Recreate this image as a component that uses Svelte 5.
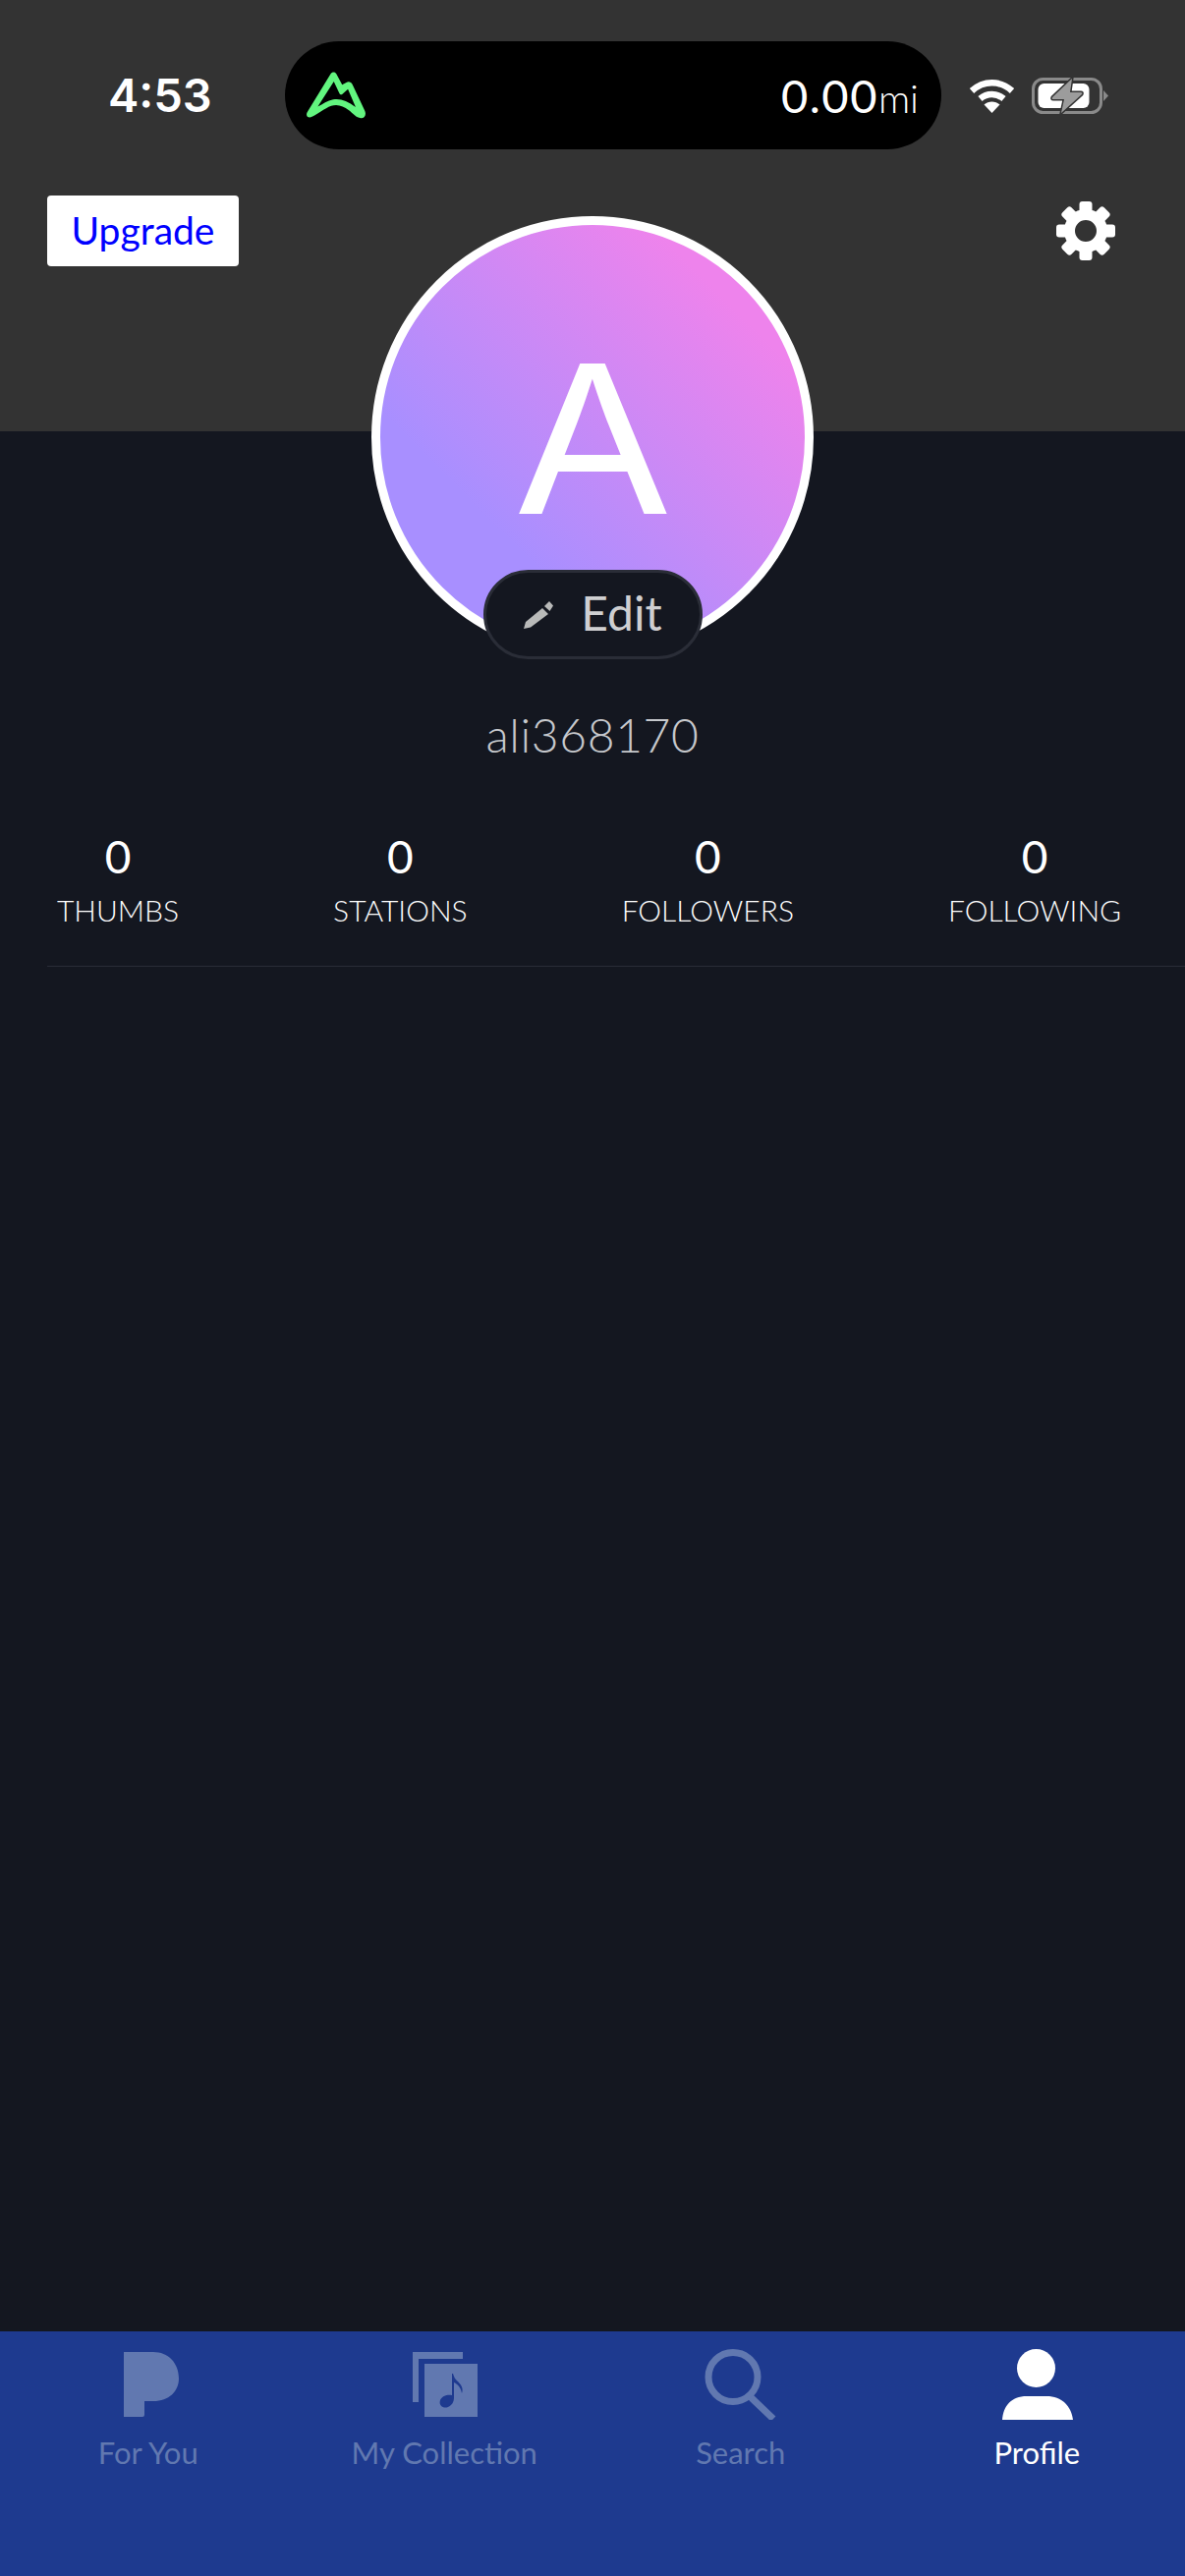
<script>
  const stats = [
    { value: 0, label: "THUMBS" },
    { value: 0, label: "STATIONS" },
    { value: 0, label: "FOLLOWERS" },
    { value: 0, label: "FOLLOWING" },
  ];

  const teeth = [0, 45, 90, 135, 180, 225, 270, 315];
</script>

<div class="page">
  <header class="header">
    <div class="status">
      <span class="time">4:53</span>
      <div class="island">
        <svg class="logo" viewBox="95 95 190 152" aria-hidden="true">
          <path
            fill-rule="evenodd"
            d="M171 103C176 97 184 97 188 104L206 138L219 131C226 127 234 129 238 137L277 220C282 232 276 243 264 242C250 241 240 228 226 217C210 205 192 197 172 204C150 212 134 228 112 238C100 244 91 235 97 224ZM180 128L130 206C146 198 160 188 178 184C200 180 222 188 248 208L224 152L206 168C202 170 199 168 197 164Z"
          />
        </svg>
        <span class="distance">0.00<small>mi</small></span>
      </div>
      <div class="status-icons">
        <svg class="wifi" viewBox="0 0 47 35" aria-hidden="true">
          <path d="M3 12.5C15 1.5 32 1.5 44 12.5" />
          <path d="M11.5 20.5C18.5 14.5 28.5 14.5 35.5 20.5" />
          <path class="wifi-tip" d="M15.5 26.5C20 22.5 27 22.5 31.5 26.5L23.5 35Z" />
        </svg>
        <svg class="battery" viewBox="0 0 78 37" aria-hidden="true">
          <rect class="shell" x="1.5" y="1.5" width="69" height="34" rx="10" />
          <path class="nub" d="M73 13L78 18.5L73 24Z" />
          <rect class="charge" x="6.500" y="6" width="52" height="25" rx="6" />
          <path class="bolt" d="M41 1L21 20Q20 22 22 22H33L30 36L51 17Q52 15 50 15H39Z" />
        </svg>
      </div>
    </div>
    <div class="actions">
      <button class="upgrade">Upgrade</button>
      <svg class="gear" viewBox="0 0 60 60" aria-hidden="true">
        {#each teeth as angle}
          <rect x="23.500" y="0" width="13" height="14" rx="3" transform="rotate({angle} 30 30)" />
        {/each}
        <circle cx="30" cy="30" r="16.500" />
      </svg>
    </div>
  </header>

  <section class="profile">
    <div class="avatar-wrap">
      <div class="avatar"><span>A</span></div>
      <button class="edit">
        <svg viewBox="0 0 30 30" aria-hidden="true">
          <path d="M0 29L2 22L19 8L25 14L7 27.500Z" />
          <path d="M21 6L26 1L30 5.500L26.500 11Z" />
        </svg>
        Edit
      </button>
    </div>
    <h1 class="username">ali368170</h1>
    <div class="stats">
      {#each stats as stat}
        <div class="stat">
          <span class="value">{stat.value}</span>
          <span class="label">{stat.label}</span>
        </div>
      {/each}
    </div>
  </section>

  <nav class="tabs">
    <div class="tab">
      <svg viewBox="0 0 80 72" aria-hidden="true">
        <path d="M15 3H45C60 3 71 14 71 30C71 43 61 53 45 53H36V67Q36 69 34 69H15Z" />
      </svg>
      <span>For You</span>
    </div>
    <div class="tab">
      <svg viewBox="0 0 80 72" aria-hidden="true">
        <path d="M8 3H59V10H14V54H8Z" />
        <path
          fill-rule="evenodd"
          d="M20 15H74V69H20ZM48 25V47C44 46 38 47 36 52C34 58 40 61 44 59C48 57 50 54 50 49V34C54 36 57 39 58 45C60 40 57 36 54 33C51 31 50 28 49 25Z"
        />
      </svg>
      <span>My Collection</span>
    </div>
    <div class="tab">
      <svg viewBox="0 0 80 72" aria-hidden="true">
        <circle class="lens" cx="32" cy="28.500" r="25" />
        <path class="handle" d="M50 49L73 71" />
      </svg>
      <span>Search</span>
    </div>
    <div class="tab active">
      <svg viewBox="0 0 80 72" aria-hidden="true">
        <ellipse cx="39.500" cy="19.500" rx="19.500" ry="19.500" />
        <path d="M5 72C6 58 14 48 30 48H50C66 48 75 58 77 72Z" />
      </svg>
      <span>Profile</span>
    </div>
  </nav>
</div>

<style>
  :global(body) {
    margin: 0;
    background: #141720;
  }

  .page {
    display: flex;
    flex-direction: column;
    height: 2622px;
    overflow: hidden;
    background: #141720;
    color: #fff;
    font-family: Lato, "Noto Sans", sans-serif;
  }

  .header {
    height: 439px;
    flex-shrink: 0;
    background: #333333;
  }

  .status {
    display: flex;
    align-items: center;
    padding: 42px 0 0 110px;
    height: 110px;
  }

  .time {
    width: 180px;
    font-family: Inter, sans-serif;
    font-size: 47px;
    font-weight: 600;
    line-height: 110px;
  }

  .island {
    display: flex;
    align-items: center;
    justify-content: space-between;
    width: 668px;
    height: 110px;
    padding: 0 23px 0 22px;
    box-sizing: border-box;
    border-radius: 55px;
    background: #000;
  }

  .logo {
    width: 62px;
    height: 50px;
    fill: #62f57f;
  }

  .distance {
    font-size: 47px;
    font-weight: 400;
    letter-spacing: 1.5px;
  }

  .distance small {
    font-size: 40px;
    font-weight: 300;
    letter-spacing: 0;
  }

  .status-icons {
    display: flex;
    align-items: center;
    gap: 17px;
    margin-left: 28px;
  }

  .wifi {
    width: 47px;
    height: 35px;
    fill: none;
    stroke: #fff;
    stroke-width: 6.500;
  }

  .wifi .wifi-tip {
    fill: #fff;
    stroke: none;
  }

  .battery {
    width: 78px;
    height: 37px;
  }

  .battery .shell {
    fill: none;
    stroke: #8a8a8a;
    stroke-width: 3;
  }

  .battery .nub {
    fill: #8a8a8a;
  }

  .battery .charge {
    fill: #fff;
  }

  .battery .bolt {
    fill: #9c9c9c;
    stroke: #333333;
    stroke-width: 3;
    paint-order: stroke;
  }

  .actions {
    display: flex;
    align-items: flex-start;
    justify-content: space-between;
    padding: 47px 71px 0 48px;
  }

  .upgrade {
    width: 195px;
    height: 72px;
    padding: 0 0 2px;
    border: none;
    border-radius: 4px;
    background: #fff;
    color: #0000ff;
    font-family: Lato, sans-serif;
    font-size: 39px;
    font-weight: 400;
  }

  .gear {
    width: 60px;
    height: 60px;
    margin-top: 6px;
    fill: #fff;
  }

  .gear circle {
    fill: none;
    stroke: #fff;
    stroke-width: 11;
  }

  .profile {
    flex: 1;
    min-height: 0;
  }

  .avatar-wrap {
    position: relative;
    width: 450px;
    height: 450px;
    margin: -219px auto 0;
  }

  .avatar {
    display: flex;
    align-items: center;
    justify-content: center;
    width: 450px;
    height: 450px;
    box-sizing: border-box;
    padding-top: 4px;
    border: 9px solid #fff;
    border-radius: 50%;
    background: linear-gradient(45deg, #a88fff 28%, #ee83ec 82%);
    font-family: Inter, sans-serif;
    font-size: 210px;
    font-weight: 400;
    line-height: 1;
  }

  .avatar span {
    transform: scaleX(1.12);
  }

  .edit {
    position: absolute;
    left: 114px;
    top: 360px;
    display: flex;
    align-items: center;
    justify-content: center;
    gap: 28px;
    width: 223px;
    height: 91px;
    box-sizing: border-box;
    padding: 0 0 4px;
    border: 3px solid #2a2d37;
    border-radius: 46px;
    background: #141720;
    color: #cfcfd1;
    font-family: Lato, sans-serif;
    font-size: 48px;
    font-weight: 400;
  }

  .edit svg {
    width: 30px;
    height: 30px;
    margin-top: 4px;
    fill: #b9bab9;
  }

  .username {
    margin: 48px 0 0;
    text-align: center;
    color: #c6c8cc;
    font-size: 48px;
    font-weight: 300;
    line-height: 60px;
    letter-spacing: 0.6px;
  }

  .stats {
    display: flex;
    gap: 157px;
    margin: 58px 0 0 48px;
    padding: 0 0 39px 10px;
    border-bottom: 1px solid #2a2d37;
  }

  .stat {
    display: flex;
    flex-direction: column;
    align-items: center;
  }

  .value {
    font-size: 46px;
    font-weight: 400;
    line-height: 72px;
  }

  .label {
    font-size: 30px;
    font-weight: 300;
    line-height: 36px;
  }

  .tabs {
    display: grid;
    grid-template-columns: repeat(4, 1fr);
    height: 249px;
    flex-shrink: 0;
    background: #1e3a8f;
  }

  .tab {
    display: flex;
    flex-direction: column;
    align-items: center;
    padding-top: 18px;
    color: #6178b0;
    font-size: 31px;
    line-height: 40px;
    fill: #6178b0;
  }

  .tab svg {
    width: 80px;
    height: 72px;
    margin-bottom: 13px;
  }

  .tab.active {
    color: #fff;
    fill: #fff;
  }

  .tab .lens,
  .tab .handle {
    fill: none;
    stroke: #6178b0;
    stroke-width: 7;
  }
</style>
